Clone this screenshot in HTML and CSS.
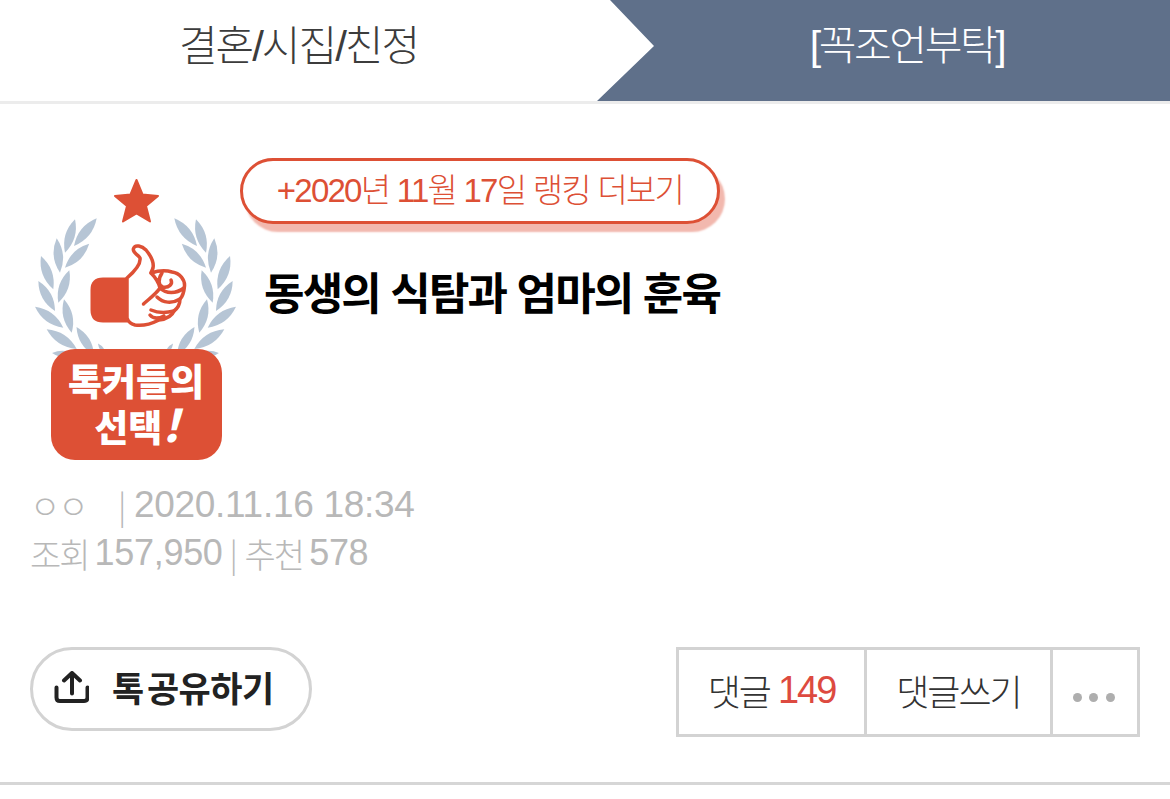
FILE: index.html
```html
<!DOCTYPE html>
<html lang="ko">
<head>
<meta charset="utf-8">
<title>동생의 식탐과 엄마의 훈육</title>
<link rel="stylesheet" href="styles.css">
</head>
<body>
<header class="crumbs">
  <div class="crumb">결혼/시집/친정</div>
  <div class="crumb-current">[꼭조언부탁]</div>
</header>
<main class="post">
  <section class="headline">
    <svg class="badge" viewBox="30 170 210 295" width="210" height="295" aria-hidden="true">
      <defs>
        <path id="leaf" d="M0 0Q.5 -.27 1 0Q.5 .27 0 0Z"/>
        <g id="wreath" class="wreath">
          <use href="#leaf" transform="translate(74 245) rotate(-50.7) scale(35.8)"/>
          <use href="#leaf" transform="translate(65 251.7) rotate(-73.3) scale(34.9)"/>
          <use href="#leaf" transform="translate(65 266.7) rotate(-44.6) scale(34)"/>
          <use href="#leaf" transform="translate(60 271.7) rotate(-95.5) scale(34.6)"/>
          <use href="#leaf" transform="translate(58.3 301.7) rotate(-71.2) scale(34.2)"/>
          <use href="#leaf" transform="translate(53.3 288.3) rotate(-110.3) scale(35.5)"/>
          <use href="#leaf" transform="translate(55 310) rotate(-119) scale(34.3)"/>
          <use href="#leaf" transform="translate(71.7 331.7) rotate(-103) scale(34.3)"/>
          <use href="#leaf" transform="translate(63.3 326.7) rotate(-143.4) scale(35.2)"/>
          <use href="#leaf" transform="translate(76.7 348) rotate(-146.7) scale(35.9)"/>
          <use href="#leaf" transform="translate(94 354) rotate(-122) scale(33)"/>
          <use href="#leaf" transform="translate(76 354) rotate(-175) scale(24)"/>
          <use href="#leaf" transform="translate(106 354) rotate(-125) scale(14)"/>
        </g>
      </defs>
      <use href="#wreath"/>
      <use href="#wreath" transform="translate(271 0) scale(-1 1)"/>
      <path class="star" d="M136.500 179L142.500 193.500L158 195L146 205L150 220.500L136.500 212.500L123 220.500L127 205L115 195L130.500 193.500Z"/>
      <path class="cuff" d="M128 276.500H103Q90.500 276.500 90.500 289V309Q90.500 321.500 103 321.500H128Z"/>
      <path class="hand" d="M127 277C134 271 141 263 140 257C138 253 132 252 133.500 247.500C135 243 142 245 146 249C151 255 154 262 153 267C152.500 269 151 271 151 272C157 270 166 269 172 271C180 272 185 279 184.500 285C184 291 182 296 180 298C180 303 178 307 174 310C172 315 166 318 159 319C151 323 141 325 135 324C131 323 128 320 127 317Z"/>
      <path class="hand-line" d="M151 272C155 276 159 283 160 287C156 293 149 298 143.500 303M162 272C158 278 158 285 163 286C169 287 173 283 171 279M160 287C166 293 176 293 184 287M157 296C163 302 172 303 180 298M151 309C158 312 166 312 174 310M150 314C154 319 160 317 164 315"/>
      <rect class="plate" x="51" y="348" width="171" height="111" rx="24"/>
      <text class="plate-text" x="136" y="395">톡커들의</text>
      <text class="plate-text" x="137" y="441">선택<tspan class="plate-bang">!</tspan></text>
    </svg>
    <div class="headline-main">
      <a class="rank-link">+2020년 11월 17일 랭킹 더보기</a>
      <h1 class="title">동생의 식탐과 엄마의 훈육</h1>
    </div>
  </section>
  <section class="meta">
    <div class="meta-row"><span class="author">ㅇㅇ</span><span class="sep">|</span><span>2020.11.16 18:34</span></div>
    <div class="meta-row"><span class="ko">조회</span><span class="num">157,950</span><span class="sep2">|</span><span class="ko">추천</span><span class="num">578</span></div>
  </section>
  <section class="actions">
    <button class="share">
      <svg class="share-icon" viewBox="0 2.500 36 36" width="36" height="36" aria-hidden="true"><path d="M3.500 19V29Q3.500 32.500 7 32.500H31Q34.500 32.500 34.500 29V19M19 25V4.500M11 12L19 4.500L27 12"/></svg>
      <span class="share-label">톡 공유하기</span>
    </button>
    <div class="tools">
      <div class="tool tool-count">댓글 <em class="count">149</em></div>
      <div class="tool tool-write">댓글쓰기</div>
      <div class="tool tool-more"><i class="dot"></i><i class="dot"></i><i class="dot"></i></div>
    </div>
  </section>
</main>
</body>
</html>
```
FILE: styles.css
```css
* { box-sizing: border-box; }
html, body { margin: 0; padding: 0; background: #fff; }
body {
  width: 1170px;
  height: 799px;
  overflow: hidden;
  font-family: "Liberation Sans", "Noto Sans CJK KR", sans-serif;
}
.crumbs {
  display: flex;
  height: 104px;
  border-bottom: 3px solid #ececec;
}
.crumb {
  width: 597px;
  text-align: center;
  font-size: 42px;
  line-height: 93px;
  font-weight: 300;
  letter-spacing: -2px;
  color: #3c3c3c;
}
.crumb-current {
  flex: 1;
  padding-left: 47px;
  text-align: center;
  font-size: 41px;
  line-height: 93px;
  font-weight: 300;
  letter-spacing: -2.400px;
  color: #fff;
  background: #5f708a;
  clip-path: polygon(13px 0, 100% 0, 100% 100%, 0 100%, 57px 46px);
}
.post {
  height: 681px;
  padding: 54px 30px 0;
  border-bottom: 3px solid #d6d6d6;
}
.headline { display: flex; align-items: flex-start; height: 323px; }
.badge { display: block; margin-top: 13px; flex: none; }
.wreath { fill: #b6c5d5; }
.star { fill: #dd5035; stroke: #dd5035; stroke-width: 2; stroke-linejoin: round; }
.cuff { fill: #dd5035; }
.hand { fill: #fff; stroke: #dd5035; stroke-width: 3.500; stroke-linejoin: round; }
.hand-line { fill: none; stroke: #dd5035; stroke-width: 3.500; stroke-linecap: round; }
.plate { fill: #dd5035; }
.plate-text {
  fill: #fff;
  font-family: "Noto Sans CJK KR", sans-serif;
  font-size: 37px;
  font-weight: 900;
  text-anchor: middle;
}
.plate-bang { font-size: 44px; font-style: italic; }
.headline-main { display: flex; flex-direction: column; align-items: flex-start; }
.rank-link {
  display: block;
  width: 480px;
  height: 66px;
  border: 3px solid #dd5035;
  border-radius: 33px;
  box-shadow: 5px 8px 2px #f2b8ae;
  background: #fff;
  text-align: center;
  font-size: 33px;
  line-height: 60px;
  font-weight: 300;
  letter-spacing: -1.750px;
  color: #dd5035;
}
.title {
  margin: 38px 0 0 24px;
  font-size: 44px;
  line-height: 66px;
  font-weight: 700;
  letter-spacing: -1.850px;
  color: #000;
  white-space: nowrap;
}
.meta { color: #b8b8b8; font-size: 37px; letter-spacing: -.3px; }
.meta-row { display: flex; align-items: center; height: 48px; white-space: nowrap; }
.author { width: 88px; font-size: 33px; font-weight: 300; font-family: "Noto Sans CJK KR", sans-serif; letter-spacing: -2px; }
.sep { width: 16px; font-size: 33px; font-weight: 300; font-family: "Noto Sans CJK KR", sans-serif; }
.sep2 { width: 22px; font-size: 33px; text-align: center; font-weight: 300; font-family: "Noto Sans CJK KR", sans-serif; }
.ko { margin-right: 6px; font-size: 34px; font-weight: 300; letter-spacing: -2px; }
.num { font-size: 36px; }
.actions {
  display: flex;
  justify-content: space-between;
  align-items: flex-start;
  margin-top: 70px;
}
.share {
  display: flex;
  align-items: center;
  gap: 23px;
  width: 282px;
  height: 84px;
  padding: 0 0 0 20px;
  border: 3px solid #d3d3d3;
  border-radius: 42px;
  background: #fff;
  font-family: inherit;
  font-size: 35px;
  font-weight: 700;
  letter-spacing: -.5px;
  word-spacing: -6px;
  color: #222;
}
.share-label { margin-bottom: 6px; }
.share-icon { display: block; flex: none; fill: none; stroke: #222; stroke-width: 4; stroke-linecap: round; stroke-linejoin: round; }
.tools {
  display: flex;
  width: 464px;
  height: 90px;
  border: 3px solid #d3d3d3;
}
.tool {
  display: flex;
  align-items: center;
  justify-content: center;
  font-size: 36px;
  font-weight: 300;
  letter-spacing: -2px;
  color: #333;
  padding-bottom: 4px;
  white-space: pre;
}
.tool-count { width: 188px; border-right: 3px solid #d3d3d3; }
.tool-write { width: 186px; border-right: 3px solid #d3d3d3; }
.tool-more { flex: 1; gap: 7.500px; padding: 10px 3px 0 0; }
.count { font-size: 38px; font-style: normal; color: #dd4a40; }
.dot { width: 9px; height: 9px; border-radius: 50%; background: #aeaeae; }
```
